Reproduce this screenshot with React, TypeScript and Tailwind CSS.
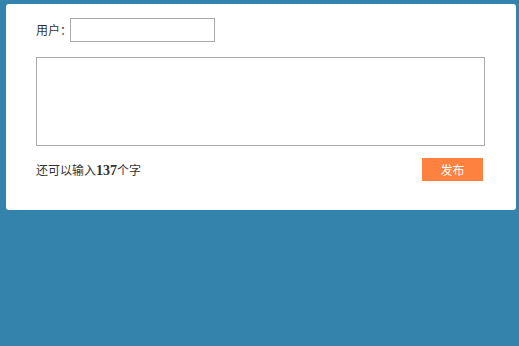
export default function App() {
  return (
    <div className="min-h-[346px] w-[519px] bg-[#3483ad] pt-[4px] pl-[6px]" style={{ fontFamily: "'Noto Sans CJK SC', sans-serif" }}>
      <div className="w-[510px] h-[206px] rounded-[3px] bg-white pt-[14px] pl-[30px]">
        {/* 用户 */}
        <div className="flex items-center h-[24px] text-[12px] text-[#333]">
          <span>用户：</span>
          <input className="ml-[-2px] w-[145px] h-[24px] border border-[#a9a9a9] outline-none px-1" />
        </div>
        <textarea className="mt-[15px] block w-[449px] h-[89px] border border-[#a9a9a9] resize-none outline-none" />
        <div className="mt-[12px] flex w-[447px] items-center justify-between">
          <span className="pt-[2px] text-[12px] text-[#333]">
            还可以输入
            <b className="text-[14px]" style={{ fontFamily: "'Liberation Serif', serif" }}>137</b>
            个字
          </span>
          <button className="w-[61px] h-[23px] bg-[#ff8140] text-white text-[12px] leading-none">发布</button>
        </div>
      </div>
    </div>
  );
}
